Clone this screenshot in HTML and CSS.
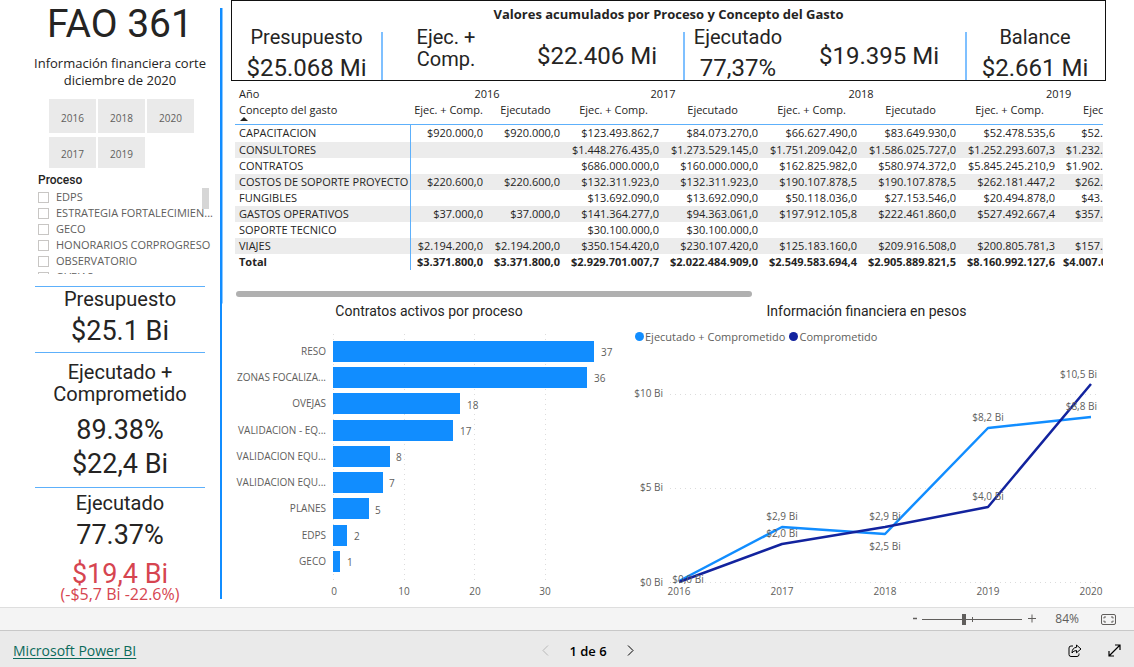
FILE: index.html
```html
<!DOCTYPE html>
<html lang="es">
<head>
<meta charset="utf-8">
<meta name="viewport" content="width=device-width, initial-scale=1">
<title>FAO 361 - Microsoft Power BI</title>
<link rel="stylesheet" href="styles.css">
</head>
<body>
<div class="report">
  <aside class="sidebar">
    <h1 class="report-title">FAO 361</h1>
    <p class="report-subtitle">Información financiera corte diciembre de 2020</p>
    <div class="years" role="group" aria-label="Año">
      <button type="button" class="year">2016</button>
      <button type="button" class="year">2017</button>
      <button type="button" class="year">2018</button>
      <button type="button" class="year">2019</button>
      <button type="button" class="year">2020</button>
    </div>
    <fieldset class="slicer">
      <legend class="slicer-title">Proceso</legend>
      <div class="slicer-body">
        <div class="slicer-list">
          <label class="option"><input type="checkbox"><span>EDPS</span></label>
          <label class="option"><input type="checkbox"><span>ESTRATEGIA FORTALECIMIEN...</span></label>
          <label class="option"><input type="checkbox"><span>GECO</span></label>
          <label class="option"><input type="checkbox"><span>HONORARIOS CORPROGRESO</span></label>
          <label class="option"><input type="checkbox"><span>OBSERVATORIO</span></label>
          <label class="option"><input type="checkbox"><span>OVEJAS</span></label>
        </div>
        <div class="slicer-thumb"></div>
      </div>
    </fieldset>
    <section class="card card-budget">
      <h2 class="label">Presupuesto</h2>
      <p class="figure">$25.1 Bi</p>
    </section>
    <section class="card card-committed">
      <h2 class="label">Ejecutado + Comprometido</h2>
      <p class="figure">89.38%</p>
      <p class="figure">$22,4 Bi</p>
    </section>
    <section class="card card-executed">
      <h2 class="label">Ejecutado</h2>
      <p class="figure">77.37%</p>
      <p class="figure figure-bad">$19,4 Bi</p>
      <p class="variance">(-$5,7 Bi -22.6%)</p>
    </section>
  </aside>
  <div class="divider"></div>
  <main class="main">
    <section class="summary">
      <h2 class="summary-title">Valores acumulados por Proceso y Concepto del Gasto</h2>
      <div class="kpis">
        <div class="kpi">
          <div class="label">Presupuesto</div>
          <div class="amount">$25.068 Mi</div>
        </div>
        <div class="kpi kpi-pair kpi-committed">
          <div class="label">Ejec. +<br>Comp.</div>
          <div class="amount">$22.406 Mi</div>
        </div>
        <div class="kpi kpi-pair kpi-executed">
          <div>
            <div class="label">Ejecutado</div>
            <div class="amount">77,37%</div>
          </div>
          <div class="amount">$19.395 Mi</div>
        </div>
        <div class="kpi">
          <div class="label">Balance</div>
          <div class="amount">$2.661 Mi</div>
        </div>
      </div>
    </section>

    <div class="matrix-wrap">
      <table class="matrix">
        <colgroup>
          <col class="col-name"><col class="col-short"><col class="col-short"><col class="col-long"><col class="col-long"><col class="col-long"><col class="col-long"><col class="col-long"><col class="col-rest">
        </colgroup>
        <thead>
          <tr class="head-year"><th scope="col">Año</th><th colspan="2">2016</th><th colspan="2">2017</th><th colspan="2">2018</th><th colspan="2" class="year-open">2019</th></tr>
          <tr class="head-measure"><th scope="col">Concepto del gasto<span class="sort"></span></th><th>Ejec. + Comp.</th><th>Ejecutado</th><th>Ejec. + Comp.</th><th>Ejecutado</th><th>Ejec. + Comp.</th><th>Ejecutado</th><th>Ejec. + Comp.</th><th>Ejecutado</th></tr>
        </thead>
        <tbody>
          <tr><th scope="row">CAPACITACION</th><td>$920.000,0</td><td>$920.000,0</td><td>$123.493.862,7</td><td>$84.073.270,0</td><td>$66.627.490,0</td><td>$83.649.930,0</td><td>$52.478.535,6</td><td>$52.</td></tr>
          <tr><th scope="row">CONSULTORES</th><td></td><td></td><td>$1.448.276.435,0</td><td>$1.273.529.145,0</td><td>$1.751.209.042,0</td><td>$1.586.025.727,0</td><td>$1.252.293.607,3</td><td>$1.232.</td></tr>
          <tr><th scope="row">CONTRATOS</th><td></td><td></td><td>$686.000.000,0</td><td>$160.000.000,0</td><td>$162.825.982,0</td><td>$580.974.372,0</td><td>$5.845.245.210,9</td><td>$1.902.</td></tr>
          <tr><th scope="row">COSTOS DE SOPORTE PROYECTO</th><td>$220.600,0</td><td>$220.600,0</td><td>$132.311.923,0</td><td>$132.311.923,0</td><td>$190.107.878,5</td><td>$190.107.878,5</td><td>$262.181.447,2</td><td>$262.</td></tr>
          <tr><th scope="row">FUNGIBLES</th><td></td><td></td><td>$13.692.090,0</td><td>$13.692.090,0</td><td>$50.118.036,0</td><td>$27.153.546,0</td><td>$20.494.878,0</td><td>$43.</td></tr>
          <tr><th scope="row">GASTOS OPERATIVOS</th><td>$37.000,0</td><td>$37.000,0</td><td>$141.364.277,0</td><td>$94.363.061,0</td><td>$197.912.105,8</td><td>$222.461.860,0</td><td>$527.492.667,4</td><td>$357.</td></tr>
          <tr><th scope="row">SOPORTE TECNICO</th><td></td><td></td><td>$30.100.000,0</td><td>$30.100.000,0</td><td></td><td></td><td></td><td></td></tr>
          <tr><th scope="row">VIAJES</th><td>$2.194.200,0</td><td>$2.194.200,0</td><td>$350.154.420,0</td><td>$230.107.420,0</td><td>$125.183.160,0</td><td>$209.916.508,0</td><td>$200.805.781,3</td><td>$157.</td></tr>
        </tbody>
        <tfoot>
          <tr><th scope="row">Total</th><td>$3.371.800,0</td><td>$3.371.800,0</td><td>$2.929.701.007,7</td><td>$2.022.484.909,0</td><td>$2.549.583.694,4</td><td>$2.905.889.821,5</td><td>$8.160.992.127,6</td><td>$4.007.0</td></tr>
        </tfoot>
      </table>
      <div class="hscroll"><div class="hscroll-thumb"></div></div>
    </div>

    <div class="charts">
      <section class="chart">
        <h2 class="chart-title">Contratos activos por proceso</h2>
        <svg class="plot" viewBox="0 0 396 280" role="img" aria-label="Contratos activos por proceso">
          <g class="grid">
            <path d="M102.5 9V259M173.5 9V259M243.5 9V259M314.5 9V259"/>
          </g>
          <g class="bars">
            <rect x="102" y="16" width="261" height="21"/>
            <rect x="102" y="42" width="254" height="21"/>
            <rect x="102" y="68" width="127" height="21"/>
            <rect x="102" y="95" width="120" height="21"/>
            <rect x="102" y="121" width="57" height="21"/>
            <rect x="102" y="147" width="50" height="21"/>
            <rect x="102" y="173" width="36" height="21"/>
            <rect x="102" y="200" width="14" height="21"/>
            <rect x="102" y="226" width="7" height="21"/>
          </g>
          <g class="end">
            <text x="95" y="30">RESO</text>
            <text x="95" y="56">ZONAS FOCALIZA...</text>
            <text x="95" y="82">OVEJAS</text>
            <text x="95" y="109">VALIDACION - EQ...</text>
            <text x="95" y="135">VALIDACION EQU...</text>
            <text x="95" y="161">VALIDACION EQU...</text>
            <text x="95" y="187">PLANES</text>
            <text x="95" y="214">EDPS</text>
            <text x="95" y="240">GECO</text>
          </g>
          <g>
            <text x="370" y="31">37</text>
            <text x="363" y="57">36</text>
            <text x="236" y="84">18</text>
            <text x="229" y="110">17</text>
            <text x="165" y="136">8</text>
            <text x="158" y="162">7</text>
            <text x="144" y="189">5</text>
            <text x="123" y="215">2</text>
            <text x="116" y="241">1</text>
          </g>
          <g class="mid">
            <text x="103" y="270">0</text>
            <text x="173" y="270">10</text>
            <text x="244" y="270">20</text>
            <text x="314" y="270">30</text>
          </g>
        </svg>
      </section>
      <section class="chart">
        <h2 class="chart-title">Información financiera en pesos</h2>
        <ul class="legend">
          <li><span class="dot dot-light"></span>Ejecutado + Comprometido</li>
          <li><span class="dot dot-dark"></span>Comprometido</li>
        </ul>
        <svg class="plot" viewBox="0 0 479 256" role="img" aria-label="Información financiera en pesos">
          <g class="grid">
            <path d="M43 45.500H470M43 139.500H470M43 233.500H470"/>
          </g>
          <polyline class="line line-light" points="52,232 155,178 258,185 361,79 464,68"/>
          <polyline class="line line-dark" points="52,233 155,195 258,178 361,158 464,35"/>
          <g class="end">
            <text x="36" y="48">$10 Bi</text>
            <text x="36" y="142">$5 Bi</text>
            <text x="36" y="237">$0 Bi</text>
            <text x="470" y="29">$10,5 Bi</text>
            <text x="470" y="61">$8,8 Bi</text>
          </g>
          <g class="mid">
            <text x="61" y="234">$0,0 Bi</text>
            <text x="155" y="171">$2,9 Bi</text>
            <text x="155" y="188">$2,0 Bi</text>
            <text x="258" y="171">$2,9 Bi</text>
            <text x="258" y="201">$2,5 Bi</text>
            <text x="361" y="72">$8,2 Bi</text>
            <text x="361" y="151">$4,0 Bi</text>
            <text x="52" y="246">2016</text>
            <text x="155" y="246">2017</text>
            <text x="258" y="246">2018</text>
            <text x="361" y="246">2019</text>
            <text x="464" y="246">2020</text>
          </g>
        </svg>
      </section>
    </div>
  </main>
</div>

<div class="zoombar">
  <button type="button" class="zoom-step" aria-label="Alejar"><svg width="6" height="12" viewBox="0 0 6 12"><path d="M1 5.500H5" stroke="currentColor" stroke-width="1.500"/></svg></button>
  <div class="zoom-track"><input class="zoom-range" type="range" min="10" max="190" value="84" aria-label="Zoom"></div>
  <button type="button" class="zoom-step" aria-label="Acercar"><svg width="8" height="12" viewBox="0 0 8 12"><path d="M0 5.500H8M4 1.500V9.500" stroke="currentColor"/></svg></button>
  <output class="zoom-value">84%</output>
  <button type="button" class="zoom-fit" aria-label="Ajustar a la página">
    <svg width="15" height="11" viewBox="0 0 15 11" fill="none" stroke="currentColor"><rect x=".5" y=".5" width="14" height="10" rx="1.500"/><path d="M5 3H3V4.500M3 6.500V8H5M10 3H12V4.500M12 6.500V8H10"/></svg>
  </button>
</div>

<footer class="footer">
  <a class="brand" href="#">Microsoft Power BI</a>
  <nav class="pager" aria-label="Páginas">
    <button type="button" class="icon-button" aria-label="Página anterior" disabled><svg width="7" height="11" viewBox="0 0 7 11" fill="none" stroke="currentColor"><path d="M6 .5L1 5.500L6 10.500"/></svg></button>
    <span>1 de 6</span>
    <button type="button" class="icon-button" aria-label="Página siguiente"><svg width="7" height="11" viewBox="0 0 7 11" fill="none" stroke="currentColor"><path d="M1 .5L6 5.500L1 10.500"/></svg></button>
  </nav>
  <div class="actions">
    <button type="button" class="icon-button" aria-label="Compartir"><svg width="14" height="14" viewBox="0 0 14 14" fill="none" stroke="currentColor" stroke-linejoin="round"><path d="M5 2H3Q1 2 1 4V10.500Q1 12.500 3 12.500H9Q11 12.500 11 10.500V9.500"/><path d="M8.500 1L13 5L8.500 8.800V6.500Q5.500 6.500 4 9Q4 3.800 8.500 3.300Z"/></svg></button>
    <button type="button" class="icon-button" aria-label="Pantalla completa"><svg width="13" height="13" viewBox="0 0 13 13" fill="none" stroke="currentColor" stroke-width="1.200"><path d="M1 12L12 1M7 1H12V6M1 7V12H6"/></svg></button>
  </div>
</footer>
</body>
</html>
```

FILE: styles.css
```css
:root {
  --blue: #118dff;
  --blue-soft: #5db0fb;
  --navy: #12239e;
  --ink: #252423;
  --muted: #605e5c;
  --ui: "Open Sans", "Noto Sans", sans-serif;
  --din: Roboto, "Open Sans", sans-serif;
}

* { box-sizing: border-box; }

body {
  margin: 0;
  min-height: 100vh;
  display: flex;
  flex-direction: column;
  background: #fff;
  color: var(--ink);
  font: 11px/16px var(--ui);
}

h1, h2, p, ul { margin: 0; padding: 0; font-weight: 400; }

button {
  border: 0;
  padding: 0;
  background: none;
  color: inherit;
  font: inherit;
  cursor: pointer;
}

.report {
  flex: 1;
  display: grid;
  grid-template-columns: 220px 3px 1fr;
}

/* Sidebar */
.sidebar {
  padding: 0 15px 0 35px;
  text-align: center;
}

.report-title {
  padding-top: 2px;
  font: 39px/44px var(--din);
}

.report-subtitle {
  margin: 9px -4px 0;
  font-size: 13px;
  line-height: 17px;
}

.years {
  display: grid;
  grid-template-rows: 34px 31px;
  grid-auto-columns: 47px;
  grid-auto-flow: column;
  gap: 4px 2px;
  margin: 10px 0 0 14px;
}

.year {
  padding-top: 3px;
  background: #eaeaea;
  color: var(--muted);
  font-size: 10px;
}

.slicer {
  margin: 0 -12px 0 0;
  border: 0;
  padding: 0 0 0 3px;
  min-width: 0;
  text-align: left;
}

.slicer-title {
  padding: 4px 0 0;
  font: 500 12px/16px var(--din);
}

.slicer-body {
  position: relative;
  height: 86px;
  overflow: hidden;
}

.slicer-thumb {
  position: absolute;
  top: 0;
  right: 8px;
  width: 7px;
  height: 21px;
  background: #d6d6d6;
}

.option {
  display: flex;
  align-items: center;
  gap: 7px;
  height: 16px;
  color: var(--muted);
}

.slicer-list { padding-top: 1px; }

.option span { white-space: nowrap; }

.option input {
  appearance: none;
  flex: none;
  width: 11px;
  height: 11px;
  margin: 0;
  border: 1px solid #c8c6c4;
  background: #fff;
}

.option input:checked { background: var(--muted); }

.card { border-top: 1px solid var(--blue-soft); }

.label { font: 20px/22px var(--din); }

.figure { font: 27px/34px var(--din); }

.card-budget { margin-top: 12px; padding: 1px 0 4px; }
.card-budget .figure { padding-top: 4px; }

.card-committed { padding: 8px 10px 6px; }
.card-committed .label { padding-bottom: 8px; }

.card-executed { padding-top: 4px; }
.card-executed .figure { padding-top: 4px; }

.card-executed .figure-bad { color: #d64550; line-height: 36px; }

.variance {
  margin-top: -4px;
  color: #d64550;
  font-size: 16px;
  line-height: 12px;
  white-space: nowrap;
}

.divider {
  margin: 8px 0;
  background:
    linear-gradient(var(--blue), var(--blue)) left / 2px 100% no-repeat,
    linear-gradient(#8cc8ff, #8cc8ff) top / 100% 50% no-repeat;
}

/* Summary band */
.main {
  min-width: 0;
  padding: 0 28px 0 8px;
}

.summary {
  border: 1px solid #111;
  height: 81px;
  overflow: hidden;
  text-align: center;
}

.summary-title {
  padding: 5px 0 3px;
  font-size: 13px;
  line-height: 17px;
  font-weight: 700;
}

.kpis {
  display: grid;
  grid-template-columns: 149fr 302fr 282fr 140fr;
}

.kpi {
  display: grid;
  grid-template-rows: 22px auto;
  height: 55px;
}

.kpi + .kpi {
  background: linear-gradient(#7fc0ff, #7fc0ff) 0 6px / 2px 100% no-repeat;
}

.amount {
  padding-top: 4px;
  font: 24px/32px var(--din);
  white-space: nowrap;
}

.kpi-pair {
  grid-template-rows: auto;
}

.kpi-committed { grid-template-columns: 130fr 172fr; }
.kpi-executed { grid-template-columns: 110fr 172fr; }

.kpi-pair > .amount { padding-top: 14px; }

/* Matrix */
.matrix-wrap {
  margin: 5px 3px 0 4px;
  overflow: hidden;
}

.matrix {
  width: 100%;
  table-layout: fixed;
  border-collapse: collapse;
}

.col-name { width: 175px; }
.col-short { width: 77px; }
.col-long { width: 99px; }

.matrix th,
.matrix td {
  height: 16px;
  padding: 0 4px;
  line-height: 16px;
  overflow: hidden;
  white-space: nowrap;
  font-weight: 400;
}

.matrix td { text-align: right; }
.matrix td:last-child { padding: 0; }
.matrix th:first-child { text-align: left; }

.matrix .year-open {
  padding-left: 86px;
  text-align: left;
}

.matrix .head-measure th {
  height: 22px;
  padding-bottom: 6px;
  border-bottom: 1px solid var(--blue-soft);
}

.matrix .head-measure th:first-child { position: relative; }

.head-measure th:last-child { text-align: left; }

.matrix .head-measure th:last-child { padding: 0 0 6px 24px; }

.sort {
  position: absolute;
  left: 5px;
  bottom: 3px;
  border: 4px solid transparent;
  border-top: 0;
  border-bottom-color: var(--ink);
}

.matrix tbody th,
.matrix tfoot th { border-right: 1px solid var(--blue-soft); }

.matrix tbody tr:first-child > * { height: 17px; }

.matrix tbody tr:nth-child(even) { background: #ececec; }

.matrix tfoot th,
.matrix tfoot td { font-weight: 700; }

.matrix tfoot td:last-child {
  padding-left: 4px;
  text-align: left;
}

.hscroll { padding: 21px 0 0 1px; }

.hscroll-thumb {
  width: 59.5%;
  height: 6px;
  border-radius: 3px;
  background: #b0b0b0;
}

/* Charts */
.charts {
  display: grid;
  grid-template-columns: 396fr 479fr;
}

.chart { min-width: 0; }

.chart-title {
  padding: 5px 0;
  font: 14px/18px var(--din);
  text-align: center;
}

.plot {
  display: block;
  width: 100%;
}

.plot text {
  fill: var(--muted);
  font-size: 10px;
}

.plot .end { text-anchor: end; }
.plot .mid { text-anchor: middle; }

.grid {
  fill: none;
  stroke: #dcdcdc;
  stroke-dasharray: 1 4;
}

.bars { fill: var(--blue); }

.line {
  fill: none;
  stroke-width: 2.500;
  stroke-linejoin: round;
}

.line-light { stroke: var(--blue); }
.line-dark { stroke: var(--navy); }

.legend {
  display: flex;
  gap: 4px;
  padding: 4px 0 4px 8px;
  color: var(--muted);
  list-style: none;
}

.legend li {
  display: flex;
  align-items: center;
  gap: 1px;
}

.dot {
  width: 9px;
  height: 9px;
  border-radius: 50%;
}

.dot-light { background: var(--blue); }
.dot-dark { background: var(--navy); }

/* Zoom bar */
.zoombar {
  display: flex;
  align-items: center;
  justify-content: flex-end;
  height: 23px;
  padding-right: 18px;
  border-top: 1px solid #dedede;
  background: #f4f4f4;
  color: var(--muted);
}

.zoom-step,
.zoom-fit { display: flex; }

.zoom-track {
  display: flex;
  margin: 0 6px 0 4px;
  background: linear-gradient(var(--muted), var(--muted)) center / 1px 5px no-repeat;
}

.zoom-range {
  appearance: none;
  width: 100px;
  height: 12px;
  margin: 0;
  background: linear-gradient(var(--muted), var(--muted)) center / 100% 1px no-repeat;
}

.zoom-range::-webkit-slider-thumb {
  appearance: none;
  width: 4px;
  height: 11px;
  background: var(--muted);
}

.zoom-value {
  margin: 0 22px 0 19px;
  font-size: 12px;
}

/* Footer */
.footer {
  display: grid;
  grid-template-columns: 1fr auto 1fr;
  align-items: center;
  height: 37px;
  padding: 3px 13px 0 13px;
  border-top: 1px solid #c8c8c8;
  background: #eaeaea;
  color: #000;
}

.brand {
  justify-self: start;
  color: #0b6a5b;
  font-size: 14px;
  text-underline-offset: 2px;
}

.pager {
  display: flex;
  align-items: center;
  gap: 20px;
  padding-left: 42px;
  font-size: 13px;
  font-weight: 600;
}

.actions {
  display: flex;
  align-items: center;
  justify-content: flex-end;
  gap: 26px;
}

.icon-button { display: flex; }
.icon-button:disabled { color: #b8b8b8; }
```
